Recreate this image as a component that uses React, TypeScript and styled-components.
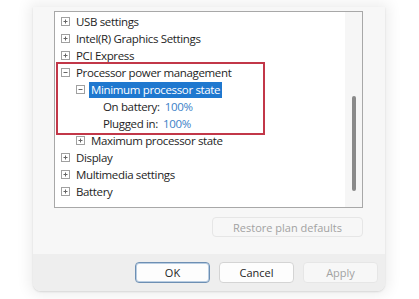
import React from 'react';
import styled, { createGlobalStyle } from 'styled-components';

const GlobalStyle = createGlobalStyle`
  body {
    margin: 0;
    background: #ffffff;
    font-family: 'Open Sans', 'Noto Sans', 'Liberation Sans', sans-serif;
  }
`;

interface Node {
  label: string;
  level: number;
  toggle?: 'plus' | 'minus';
  value?: string;
  selected?: boolean;
}

const nodes: Node[] = [
  { label: 'USB settings', level: 0, toggle: 'plus' },
  { label: 'Intel(R) Graphics Settings', level: 0, toggle: 'plus' },
  { label: 'PCI Express', level: 0, toggle: 'plus' },
  { label: 'Processor power management', level: 0, toggle: 'minus' },
  { label: 'Minimum processor state', level: 1, toggle: 'minus', selected: true },
  { label: 'On battery:', level: 2, value: '100%' },
  { label: 'Plugged in:', level: 2, value: '100%' },
  { label: 'Maximum processor state', level: 1, toggle: 'plus' },
  { label: 'Display', level: 0, toggle: 'plus' },
  { label: 'Multimedia settings', level: 0, toggle: 'plus' },
  { label: 'Battery', level: 0, toggle: 'plus' },
];

function Toggle({ kind }: { kind: 'plus' | 'minus' }) {
  return (
    <ToggleBox width="9" height="9" viewBox="0 0 9 9">
      <rect x="0.5" y="0.5" width="8" height="8" fill="#fff" stroke="#a0a0a0" />
      <path d="M2.5 4.5h4" stroke="#666" />
      {kind === 'plus' && <path d="M4.5 2.5v4" stroke="#666" />}
    </ToggleBox>
  );
}

export default function App() {
  return (
    <>
      <GlobalStyle />
      <Page>
        <Dialog>
          <Body>
            <TreePanel>
              <TreeList>
                {nodes.map((n) => (
                  <Row key={n.label} level={n.level}>
                    {n.toggle && <Toggle kind={n.toggle} />}
                    <Label selected={!!n.selected}>{n.label}</Label>
                    {n.value && <Value>{n.value}</Value>}
                  </Row>
                ))}
              </TreeList>
              <Highlight />
              <ScrollTrack>
                <Thumb />
              </ScrollTrack>
            </TreePanel>
            <RestoreRow>
              <Button disabled wide>
                Restore plan defaults
              </Button>
            </RestoreRow>
          </Body>
          <Footer>
            <Button primary>OK</Button>
            <Button>Cancel</Button>
            <Button disabled>Apply</Button>
          </Footer>
        </Dialog>
      </Page>
    </>
  );
}

const Page = styled.div`
  width: 419px;
  height: 299px;
  overflow: hidden;
  padding-top: 7px;
  box-sizing: border-box;
  background: #ffffff;
`;

const Dialog = styled.div`
  margin-left: 33px;
  width: 352px;
  height: 284px;
  background: #f7f7f7;
  border-radius: 0 0 8px 8px;
  box-shadow: 0 0 14px 4px rgba(0, 0, 0, 0.07), 0 1px 2px rgba(0, 0, 0, 0.12);
  display: flex;
  flex-direction: column;
  overflow: hidden;
`;

const Body = styled.div`
  flex: 1;
  padding: 4px 22px 0 21px;
  display: flex;
  flex-direction: column;
`;

const TreePanel = styled.div`
  position: relative;
  height: 197px;
  background: #ffffff;
  border: 1px solid #a8a8a8;
  box-sizing: border-box;
  display: flex;
`;

const TreeList = styled.div`
  flex: 1;
  padding-top: 1px;
  display: flex;
  flex-direction: column;
`;

const Row = styled.div<{ level: number }>`
  height: 17px;
  display: flex;
  align-items: center;
  padding-left: ${(p) => (p.level === 2 ? 47 : 6 + p.level * 15)}px;
  font-size: 11.5px;
  letter-spacing: -0.35px;
  color: #1e1e1e;
  white-space: nowrap;
`;

const ToggleBox = styled.svg`
  flex: none;
  margin-right: 5px;
`;

const Label = styled.span<{ selected: boolean }>`
  padding: 0 2px;
  margin-left: -1px;
  line-height: 16px;
  background: ${(p) => (p.selected ? '#1f78cf' : 'transparent')};
  color: ${(p) => (p.selected ? '#ffffff' : 'inherit')};
`;

const Value = styled.span`
  margin-left: 3px;
  color: #3b7fc8;
`;

const Highlight = styled.div`
  position: absolute;
  left: 1px;
  top: 50px;
  width: 205px;
  height: 69px;
  border: 2px solid #c23748;
  pointer-events: none;
`;

const ScrollTrack = styled.div`
  width: 17px;
  background: #f6f6f6;
  display: flex;
  justify-content: center;
  padding-top: 84px;
  box-sizing: border-box;
`;

const Thumb = styled.div`
  width: 4px;
  height: 95px;
  border-radius: 2px;
  background: #8a8a8a;
`;

const RestoreRow = styled.div`
  display: flex;
  justify-content: flex-end;
  padding-top: 9px;
`;

const Button = styled.button<{ primary?: boolean; wide?: boolean }>`
  width: ${(p) => (p.wide ? 151 : 75)}px;
  height: ${(p) => (p.wide ? 20 : 21)}px;
  padding: 0;
  font-family: 'Open Sans', 'Noto Sans', 'Liberation Sans', sans-serif;
  font-size: 11px;
  border-radius: 4px;
  background: ${(p) => (p.disabled ? '#f7f7f7' : '#fdfdfd')};
  color: ${(p) => (p.disabled ? '#a2a2a2' : '#1e1e1e')};
  border: 1px solid ${(p) => (p.primary ? '#6d8fb3' : p.disabled ? '#e6e6e6' : '#d4d4d4')};
  box-shadow: ${(p) => (p.primary ? 'inset 0 0 0 1px #b9cde2' : 'none')};
`;

const Footer = styled.div`
  height: 36px;
  background: #eeeeee;
  display: flex;
  align-items: center;
  justify-content: flex-end;
  gap: 9px;
  padding-right: 7px;
  padding-bottom: 1px;
`;
